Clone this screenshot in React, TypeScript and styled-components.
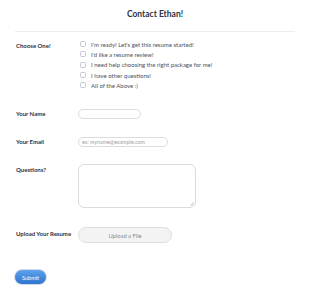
import React, {FC} from 'react';
import styled, {createGlobalStyle} from "styled-components";

const options = [
    "I'm ready! Let's get this resume started!",
    "I'd like a resume review!",
    "I need help choosing the right package for me!",
    "I have other questions!",
    "All of the Above :)"
]

const App: FC = () => {
    return (
        <>
            <GlobalStyle/>
            <StyledPage>
                <StyledTitle>Contact Ethan!</StyledTitle>
                <StyledDivider/>
                <StyledRow $top={7}>
                    <StyledLabel $offset={3}>Choose One!</StyledLabel>
                    <StyledOptions>
                        {options.map(option => (
                            <StyledOption key={option}>
                                <StyledCheckbox/>
                                {option}
                            </StyledOption>
                        ))}
                    </StyledOptions>
                </StyledRow>
                <StyledRow $top={19} $center>
                    <StyledLabel>Your Name</StyledLabel>
                    <StyledInput $width={63}/>
                </StyledRow>
                <StyledRow $top={18} $center>
                    <StyledLabel>Your Email</StyledLabel>
                    <StyledInput $width={90} placeholder="ex: myname@example.com"/>
                </StyledRow>
                <StyledRow $top={17}>
                    <StyledLabel $offset={2}>Questions?</StyledLabel>
                    <StyledTextareaWrap>
                        <StyledTextarea/>
                        <StyledGrip width="4" height="4" viewBox="0 0 4 4">
                            <path d="M0.5 3.5 L3.5 0.5 M2 3.5 L3.5 2" stroke="#9a9a9a" strokeWidth="0.6"/>
                        </StyledGrip>
                    </StyledTextareaWrap>
                </StyledRow>
                <StyledRow $top={19}>
                    <StyledLabel $offset={3}>Upload Your Resume</StyledLabel>
                    <StyledUpload type="button">Upload a File</StyledUpload>
                </StyledRow>
                <StyledSubmit type="button">Submit</StyledSubmit>
            </StyledPage>
        </>
    );
};

const GlobalStyle = createGlobalStyle`
  body {
    margin: 0;
    background: #fff;
    font-family: Lato, "Open Sans", sans-serif;
  }
`

const StyledPage = styled.div`
  width: 310px;
  height: 302px;
  padding: 9px 15px 0 15px;
  box-sizing: border-box;
  display: flex;
  flex-direction: column;
`

const StyledTitle = styled.div`
  text-align: center;
  font-size: 8.5px;
  font-weight: 700;
  color: #2c3345;
  line-height: 11px;
`

const StyledDivider = styled.div`
  margin-top: 11px;
  height: 1px;
  background: #ececec;
`

const StyledRow = styled.div<{ $top: number, $center?: boolean }>`
  display: grid;
  grid-template-columns: 62px 1fr;
  align-items: ${p => p.$center ? 'center' : 'start'};
  margin-top: ${p => p.$top}px;
  padding-left: 1px;
`

const StyledLabel = styled.div<{ $offset?: number }>`
  font-size: 6px;
  font-weight: 700;
  color: #2c3345;
  line-height: 8px;
  padding-top: ${p => p.$offset || 0}px;
  white-space: nowrap;
`

const StyledOptions = styled.div`
  display: flex;
  flex-direction: column;
  padding-left: 2px;
`

const StyledOption = styled.div`
  display: flex;
  align-items: center;
  gap: 5px;
  height: 10.3px;
  font-size: 6px;
  color: #4a4f5c;
  white-space: nowrap;
`

const StyledCheckbox = styled.span`
  width: 4px;
  height: 4px;
  border: 1px solid #c3c7d0;
  border-radius: 1.5px;
  background: #fff;
`

const StyledInput = styled.input<{ $width: number }>`
  width: ${p => p.$width}px;
  height: 10px;
  box-sizing: border-box;
  border: 1px solid #dcdcdc;
  border-radius: 6px;
  padding: 0 3px;
  font-family: Lato, "Open Sans", sans-serif;
  font-size: 5.3px;
  outline: none;

  &::placeholder {
    color: #a0a0a0;
  }
`

const StyledTextareaWrap = styled.div`
  position: relative;
  width: 118px;
  height: 44px;
`

const StyledTextarea = styled.textarea`
  display: block;
  width: 118px;
  height: 44px;
  box-sizing: border-box;
  border: 1px solid #dcdcdc;
  border-radius: 6px;
  resize: none;
  outline: none;
`

const StyledGrip = styled.svg`
  position: absolute;
  right: 2px;
  bottom: 2px;
`

const StyledUpload = styled.button`
  width: 94px;
  height: 16px;
  box-sizing: border-box;
  border: 1px solid #dedede;
  border-radius: 8px;
  background: #f3f3f3;
  color: #8a8a8a;
  font-family: Lato, "Open Sans", sans-serif;
  font-size: 5.8px;
  padding: 0;
`

const StyledSubmit = styled.button`
  margin-top: 26px;
  margin-left: -1px;
  width: 33px;
  height: 16px;
  padding: 0;
  border: 1px solid #cfdcec;
  border-radius: 8px;
  background: linear-gradient(#5ea3ea, #2f74cf);
  color: #fff;
  font-family: Lato, "Open Sans", sans-serif;
  font-size: 5.6px;
`

export default App;
